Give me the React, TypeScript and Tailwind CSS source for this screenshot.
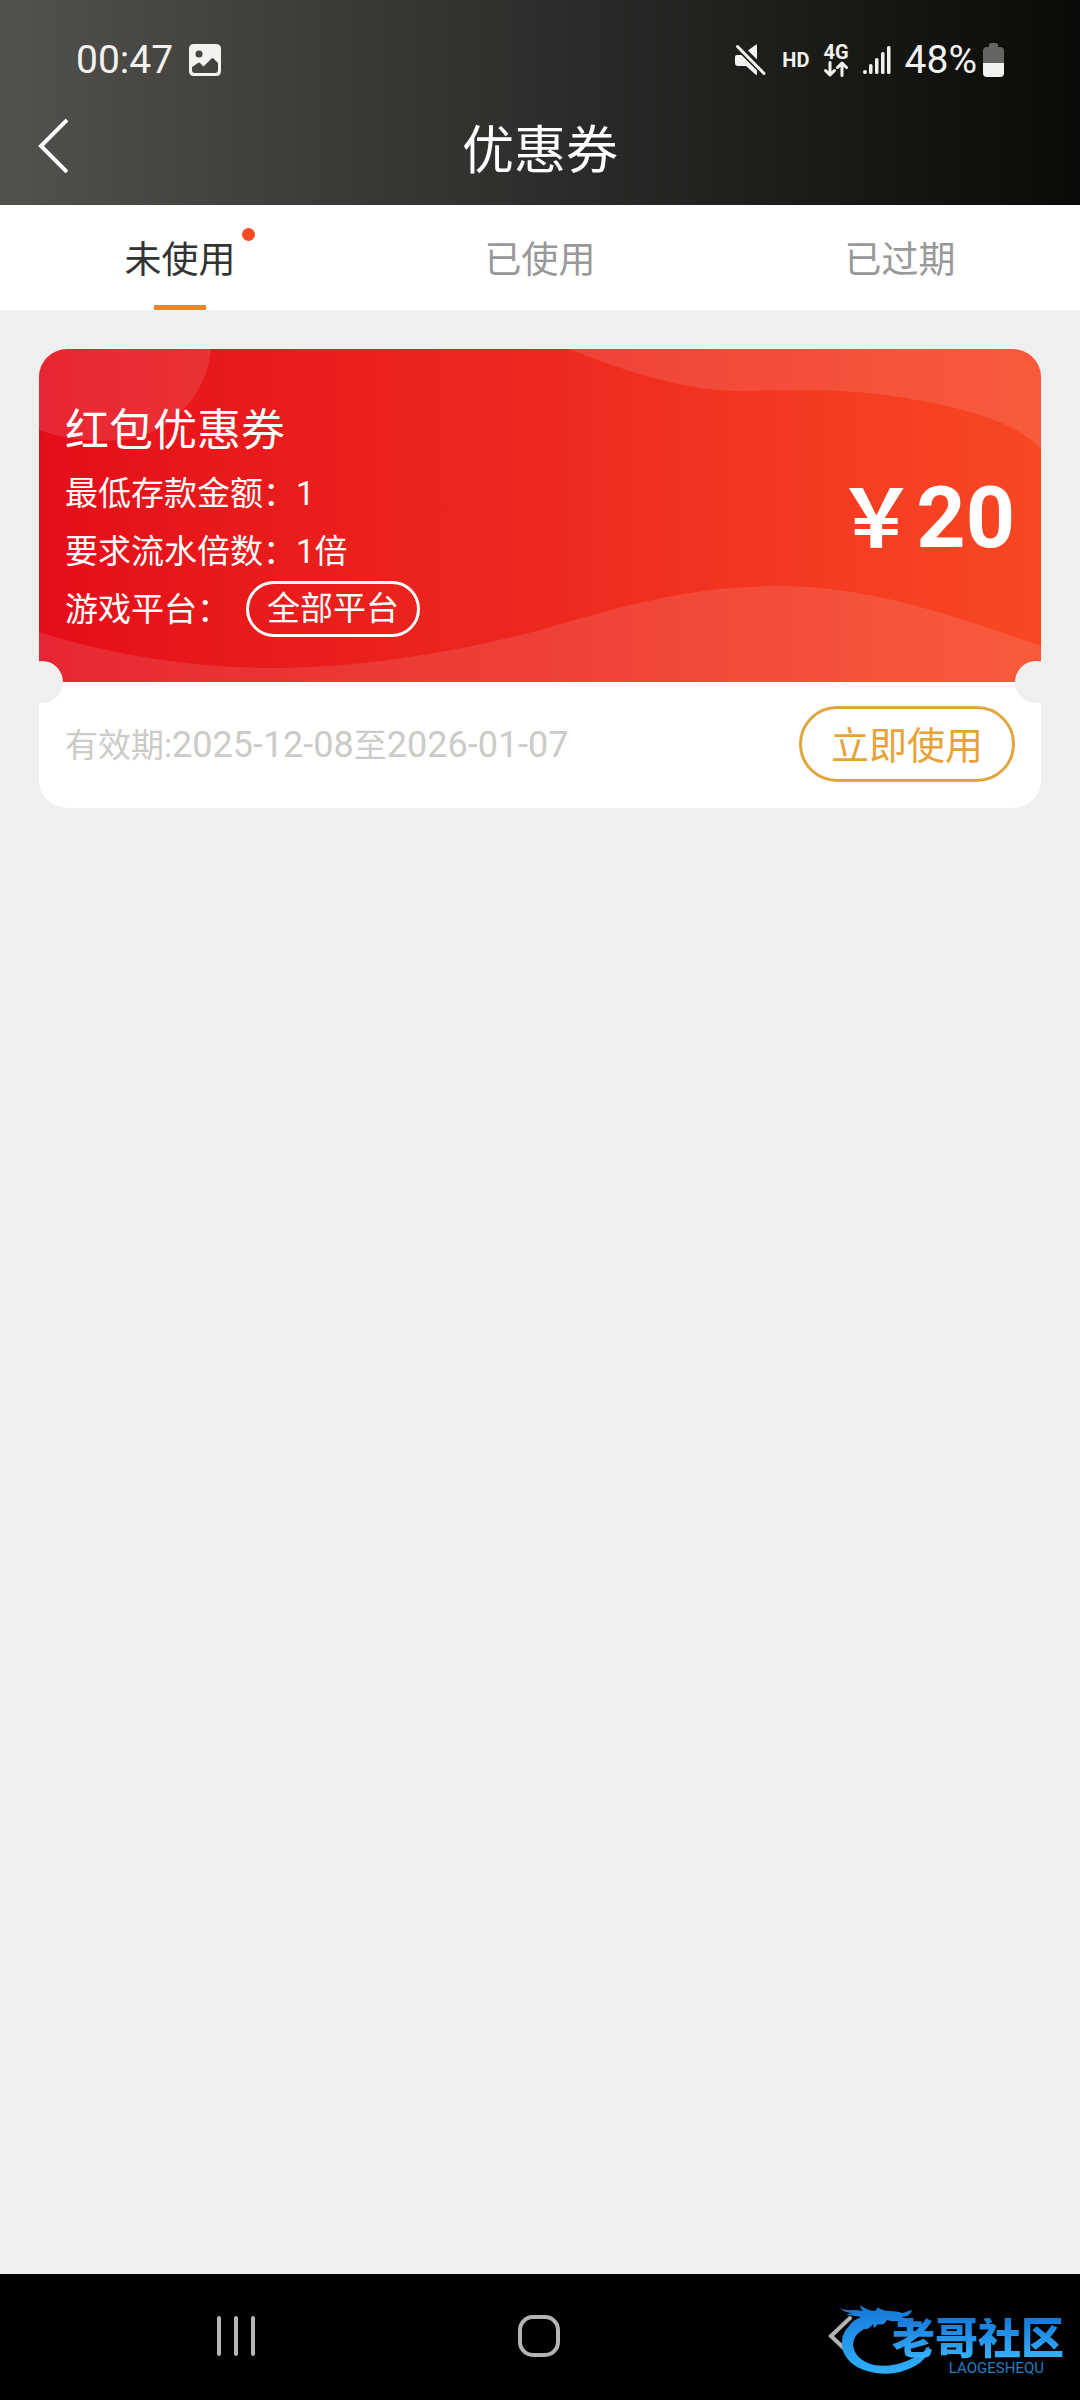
import { useState } from 'react'

const TABS = ['未使用', '已使用', '已过期']

const COUPONS = [
  {
    title: '红包优惠券',
    minDeposit: '1',
    turnover: '1倍',
    platform: '全部平台',
    amount: 20,
    start: '2025-12-08',
    end: '2026-01-07',
  },
]

function StatusBar() {
  return (
    <div className="flex items-center justify-between px-[76px] h-[120px] text-[#f2f2f0]">
      <div className="flex items-center gap-4">
        <span className="text-[39px] leading-[44px]">00:47</span>
        <svg width="32" height="32" viewBox="0 0 32 32" aria-hidden="true">
          <path
            fillRule="evenodd"
            fill="currentColor"
            d="M5 0H27Q32 0 32 5V27Q32 32 27 32H5Q0 32 0 27V5Q0 0 5 0ZM10 6.5A3.5 3.5 0 1 0 10 13.5A3.5 3.5 0 1 0 10 6.5ZM3 23V26Q3 29 6 29H26Q29 29 29 26V19L24.5 14.5Q23.5 13.5 22.5 14.5L14.5 22.5L11 19Q10 18 9 19Z"
          />
        </svg>
      </div>
      <div className="flex items-center">
        <svg width="32" height="32" viewBox="0 0 32 32" aria-hidden="true" fill="currentColor">
          <path d="M14 6.5L22 0.5Q23 0 23 1.5V15.5Z" />
          <path d="M3 11H7.5L23 26.5V30Q23 31.5 21.5 30.5L12 22H4Q1 22 1 19V13Q1 11 3 11Z" />
          <path d="M3.5 2.5L30 29.5" stroke="currentColor" strokeWidth="3" strokeLinecap="round" />
        </svg>
        <span className="ml-4 text-[20px] leading-6 font-bold">HD</span>
        <div className="ml-[14px] flex flex-col items-center">
          <span className="text-[20px] leading-[18px] font-bold">4G</span>
          <svg width="24" height="16" viewBox="0 0 24 16" aria-hidden="true" fill="none" stroke="currentColor" strokeWidth="3" strokeLinecap="round" strokeLinejoin="round">
            <path d="M6 1.5V14M1.5 9.5L6 14L10.5 9.5M18 14.5V2M13.5 6.5L18 2L22.5 6.5" />
          </svg>
        </div>
        <svg className="ml-[14px]" width="28" height="28" viewBox="0 0 28 28" aria-hidden="true" fill="currentColor">
          <circle cx="2" cy="26" r="2" />
          <rect x="6" y="18" width="3.5" height="10" rx="1.5" />
          <rect x="12" y="12" width="3.5" height="16" rx="1.5" />
          <rect x="18" y="6" width="3.5" height="22" rx="1.5" />
          <rect x="24" y="0" width="3.5" height="28" rx="1.5" />
        </svg>
        <span className="ml-[14px] text-[39px] leading-[44px]">48%</span>
        <svg className="ml-1.5" width="21" height="34" viewBox="0 0 21 34" aria-hidden="true">
          <path d="M6 2Q6 0 8 0H13Q15 0 15 2V4H17Q21 4 21 8V20H0V8Q0 4 4 4H6Z" fill="#656563" />
          <path d="M0 20H21V30Q21 34 17 34H4Q0 34 0 30Z" fill="currentColor" />
        </svg>
      </div>
    </div>
  )
}

function Waves() {
  return (
    <svg
      className="absolute inset-0 w-full h-full"
      viewBox="0 0 1002 333"
      preserveAspectRatio="none"
      aria-hidden="true"
      fill="#fff"
      fillOpacity="0.11"
    >
      <path d="M0 81C30 92 60 93 85 91C125 87 168 50 172 0H0Z" />
      <path d="M530 0C570 16 640 42 700 42C760 41 800 39 860 48C930 59 980 75 1002 100V0Z" />
      <path d="M0 283C70 305 150 319 236 319C330 319 430 300 501 281C580 258 650 237 742 237C830 237 920 268 1002 297V333H0Z" />
    </svg>
  )
}

function CouponCard({ coupon }: { coupon: (typeof COUPONS)[number] }) {
  return (
    <article className="relative rounded-[28px] overflow-hidden bg-white">
      <div className="relative bg-gradient-to-r from-[#e50c1a] via-[#ed281f] to-[#f84724] text-white">
        <Waves />
        <div className="relative flex items-center justify-between px-[26px] pt-[50px] pb-[43px]">
          <div>
            <h2 className="text-[44px] leading-[64px]">{coupon.title}</h2>
            <div className="mt-[2px] text-[33px] leading-[58px]">
              <p>最低存款金额：{coupon.minDeposit}</p>
              <p>要求流水倍数：{coupon.turnover}</p>
              <p className="flex items-start">
                游戏平台：
                <span className="ml-4 px-[18px] border-[3px] border-white rounded-full leading-[50px]">
                  {coupon.platform}
                </span>
              </p>
            </div>
          </div>
          <div className="text-[86px] leading-[96px] font-bold">
            <span className="text-[80px]">￥</span>
            {coupon.amount}
          </div>
        </div>
      </div>
      <div className="flex items-center justify-between px-[26px] pt-6 pb-[26px]">
        <p className="pt-[2px] text-[33px] leading-[48px] text-[#cbcbc7]">
          有效期:<span className="text-[36px]">{coupon.start}</span>至<span className="text-[36px]">{coupon.end}</span>
        </p>
        <button className="px-[29px] pt-1 border-[3px] border-[#e3a53d] rounded-full text-[38px] leading-[66px] text-[#e8a336]">
          立即使用
        </button>
      </div>
      {/* 票券两侧缺口 */}
      <span className="absolute -left-[18px] top-[312px] w-[42px] h-[42px] rounded-full bg-[#efefef]" />
      <span className="absolute -right-4 top-[312px] w-[42px] h-[42px] rounded-full bg-[#efefef]" />
    </article>
  )
}

function Logo() {
  return (
    <div className="absolute right-4 top-[26px] w-[224px] h-[76px]">
      <svg className="absolute left-0 top-0" width="94" height="76" viewBox="0 0 94 76" aria-hidden="true">
        <defs>
          <linearGradient id="dragon" x1="0" y1="0" x2="0" y2="1">
            <stop offset="0" stopColor="#1778d8" />
            <stop offset="1" stopColor="#2fb0fb" />
          </linearGradient>
        </defs>
        <path
          fill="url(#dragon)"
          d="M0 8Q6 11 13 10Q18 10 23 11Q20 8 20 5Q26 10 34 11Q38 10 37 7Q43 11 49 11Q57 11 63 13Q68 11 72 10Q71 14 67 16L61 17L70 19L68 23L59 21Q53 22 47 20Q44 26 38 24L34 28L33 24Q29 30 24 29Q13 35 13 45Q15 60 34 65Q51 68 69 60Q83 54 89 46Q89 58 75 66Q57 76 36 73Q10 69 3 51Q-1 36 9 26Q13 20 21 17Q12 15 6 15Q10 13 13 13Q5 13 0 8Z"
        />
      </svg>
      <div className="absolute right-0 top-[18px] flex flex-col items-end">
        <span className="text-[43px] leading-[43px] font-black bg-gradient-to-b from-[#1778d8] to-[#3ab4fb] bg-clip-text text-transparent">
          老哥社区
        </span>
        <span className="pr-5 text-[15px] leading-[15px] text-[#1f7fc4]">LAOGESHEQU</span>
      </div>
    </div>
  )
}

function NavBar() {
  return (
    <nav className="relative mt-auto grid grid-cols-3 items-center pl-[85px] pr-[87px] pb-[2px] h-[126px] bg-black text-[#b4b4b4]">
      <button aria-label="最近任务" className="justify-self-center">
        <svg width="40" height="42" viewBox="0 0 40 42" fill="none" stroke="currentColor" strokeWidth="4" strokeLinecap="round">
          <path d="M3 3V39M20 3V39M37 3V39" />
        </svg>
      </button>
      <button aria-label="主页" className="justify-self-center">
        <svg width="42" height="42" viewBox="0 0 42 42" fill="none" stroke="currentColor" strokeWidth="4">
          <rect x="2" y="2" width="38" height="38" rx="13" />
        </svg>
      </button>
      <button aria-label="返回" className="justify-self-center">
        <svg width="28" height="42" viewBox="0 0 28 42" fill="none" stroke="currentColor" strokeWidth="4" strokeLinecap="round">
          <path d="M22 3L3 21L22 39" />
        </svg>
      </button>
      <Logo />
    </nav>
  )
}

export default function App() {
  const [active, setActive] = useState(0)

  return (
    <div className="min-h-screen flex flex-col bg-[#efefef] font-[Roboto,'Noto_Sans_CJK_SC',sans-serif]">
      <header className="bg-gradient-to-r from-[#52514e] via-[#2d2d2b] to-[#0a0a08] h-[205px]">
        <StatusBar />
        <div className="-mt-[10px] grid grid-cols-3 items-center h-[72px] text-white">
          <button aria-label="返回" className="ml-[38px] justify-self-start">
            <svg width="30" height="54" viewBox="0 0 30 54" fill="none" stroke="currentColor" strokeWidth="4">
              <path d="M29 1L3 27L29 53" />
            </svg>
          </button>
          <h1 className="pt-3 text-center text-[52px] leading-[60px]">优惠券</h1>
        </div>
      </header>

      <div role="tablist" className="grid grid-cols-3 bg-white">
        {TABS.map((tab, i) => (
          <button
            key={tab}
            role="tab"
            aria-selected={i === active}
            onClick={() => setActive(i)}
            className={`flex flex-col items-center pt-3 text-[37px] leading-[88px] ${i === active ? 'text-[#333]' : 'text-[#999]'}`}
          >
            <span className="relative">
              {tab}
              {i === 0 && <span className="absolute -right-[19px] top-[11px] w-[13px] h-[13px] rounded-full bg-[#f84a20]" />}
            </span>
            <span className={`w-[52px] h-[5px] rounded-[1px] ${i === active ? 'bg-[#e8872a]' : 'bg-transparent'}`} />
          </button>
        ))}
      </div>

      <main className="p-[39px]">
        {COUPONS.map((coupon) => (
          <CouponCard key={coupon.title} coupon={coupon} />
        ))}
      </main>

      <NavBar />
    </div>
  )
}
